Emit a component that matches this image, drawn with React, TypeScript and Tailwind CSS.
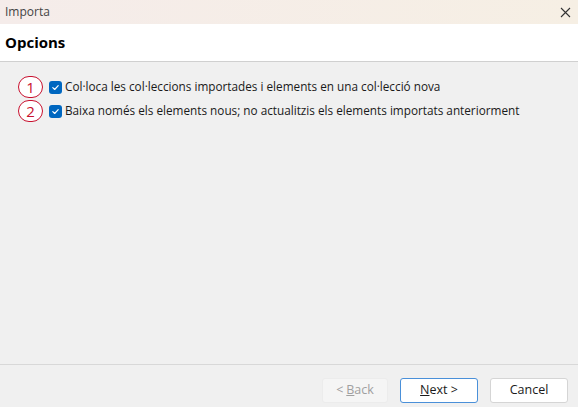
import React from "react";

function Num({ n }: { n: string }) {
  return (
    <div className="w-[25px] h-[22px] rounded-full border-[1.5px] border-[#c8102e] bg-white flex items-center justify-center text-[#c8102e] text-[15px] leading-none">
      {n}
    </div>
  );
}

function Check() {
  return (
    <div className="w-[13px] h-[13px] rounded-[3px] bg-[#0067c0] flex items-center justify-center">
      <svg width="9" height="9" viewBox="0 0 10 10">
        <path d="M2 5.2 L4.1 7.2 L8 3" fill="none" stroke="white" strokeWidth="1.3" strokeLinecap="round" strokeLinejoin="round" />
      </svg>
    </div>
  );
}

export default function App() {
  return (
    <div className="w-[578px] h-[407px] flex flex-col bg-[#f0f0f0] text-[11.75px] text-[#1a1a1a]" style={{ fontFamily: '"Segoe UI", "Open Sans", sans-serif' }}>
      <div className="h-[24px] flex items-center justify-between pl-[5px] pr-[7px] bg-gradient-to-r from-[#f5ecea] to-[#f6efe4]">
        <span className="text-[12px] text-[#444]">Importa</span>
        <svg width="11" height="11" viewBox="0 0 11 11">
          <path d="M1 1 L10 10 M10 1 L1 10" stroke="#333" strokeWidth="1.1" />
        </svg>
      </div>
      <div className="h-[38px] bg-white border-b border-[#d0d0d0] flex items-center pl-[5px]">
        <span className="text-[15px] font-bold text-black">Opcions</span>
      </div>
      <div className="flex-1 flex flex-col pt-[14px] pl-[18px] gap-[2px]">
        <div className="flex items-center h-[22px]">
          <Num n="1" />
          <div className="ml-[6px]"><Check /></div>
          <span className="ml-[3px]">Col·loca les col·leccions importades i elements en una col·lecció nova</span>
        </div>
        <div className="flex items-center h-[22px]">
          <Num n="2" />
          <div className="ml-[6px]"><Check /></div>
          <span className="ml-[3px]">Baixa només els elements nous; no actualitzis els elements importats anteriorment</span>
        </div>
      </div>
      <div className="h-[43px] border-t border-[#d8d8d8] flex items-start pt-[13px] justify-end pr-[10px] gap-[12px] text-[12.5px]">
        <div className="w-[66px] h-[25px] rounded-[3px] bg-[#f5f5f5] border border-[#ececec] flex items-center justify-center text-[#a0a0a0]">
          &lt; <span className="underline ml-[3px]">B</span>ack
        </div>
        <div className="w-[78px] h-[25px] rounded-[3px] bg-white border border-[#4a90d9] flex items-center justify-center">
          <span className="underline">N</span>ext &gt;
        </div>
        <div className="w-[78px] h-[25px] rounded-[3px] bg-white border border-[#d5d5d5] flex items-center justify-center">
          Cancel
        </div>
      </div>
    </div>
  );
}
